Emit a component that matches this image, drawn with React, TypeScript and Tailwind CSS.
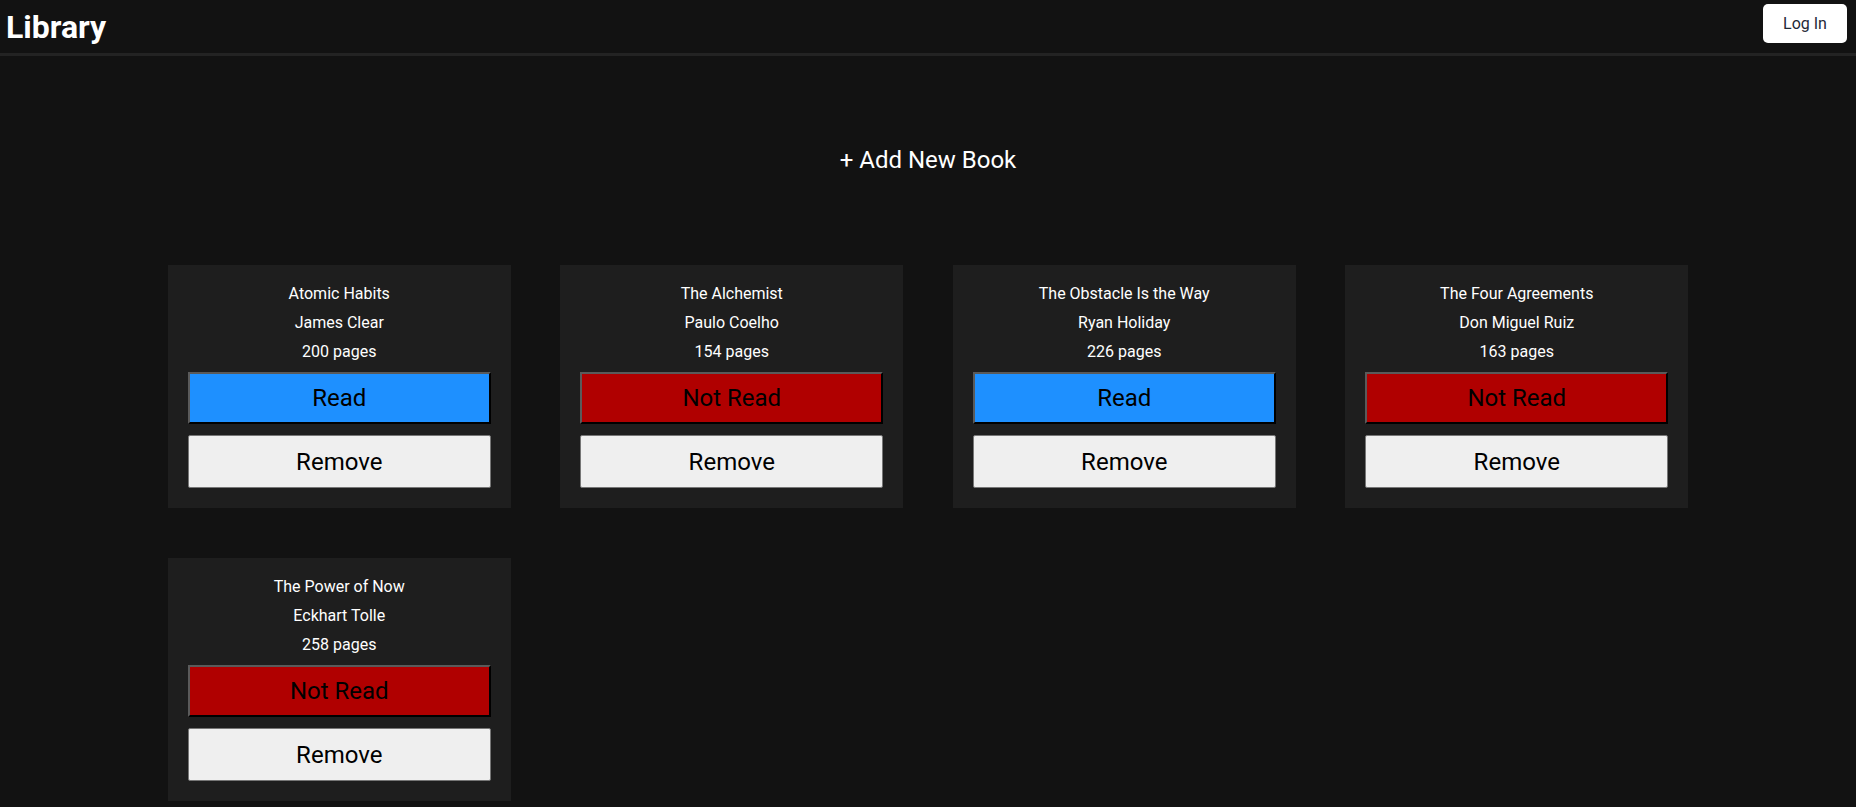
const books = [
  { title: 'Atomic Habits', author: 'James Clear', pages: 200, read: true },
  { title: 'The Alchemist', author: 'Paulo Coelho', pages: 154, read: false },
  { title: 'The Obstacle Is the Way', author: 'Ryan Holiday', pages: 226, read: true },
  { title: 'The Four Agreements', author: 'Don Miguel Ruiz', pages: 163, read: false },
  { title: 'The Power of Now', author: 'Eckhart Tolle', pages: 258, read: false },
];

const BookCard = ({ title, author, pages, read }: (typeof books)[number]) => (
  <div className="bg-[#1e1e1e] p-[20px] flex flex-col gap-[11px] text-center text-white text-[16px]">
    <p className="leading-[18px]">{title}</p>
    <p className="leading-[18px]">{author}</p>
    <p className="leading-[18px]">{pages} pages</p>
    {read ? (
      <button className="h-[52px] text-[24px] text-black bg-[#1e90ff] border-2 border-t-[#5a5a5a] border-l-[#5a5a5a] border-r-black border-b-black">
        Read
      </button>
    ) : (
      <button className="h-[52px] text-[24px] text-black bg-[#b00000] border-2 border-t-[#5a5a5a] border-l-[#5a5a5a] border-r-black border-b-black">
        Not Read
      </button>
    )}
    <button className="h-[53px] text-[24px] text-black bg-[#efefef] border border-[#767676] rounded-[2px]">
      Remove
    </button>
  </div>
);

export default function App() {
  return (
    <div className="min-h-screen bg-[#121212] font-['Roboto',sans-serif]">
      {/* Header */}
      <header className="h-[56px] flex items-center justify-between pl-[6px] pr-[9px] border-b-[3px] border-[#232323]">
        <h1 className="text-[32px] font-bold text-white leading-none">Library</h1>
        <button className="bg-white text-[#1f2937] text-[16px] rounded-[5px] w-[84px] h-[39px] mb-[6px]">
          Log In
        </button>
      </header>

      <main className="flex flex-col items-center pb-[40px]">
        <button className="mt-[90px] text-[24px] leading-[28px] text-white">+ Add New Book</button>

        <div className="mt-[91px] grid grid-cols-[repeat(4,343px)] gap-y-[50px] gap-x-[49.5px]">
          {books.map((book, idx) => (
            <BookCard key={idx} {...book} />
          ))}
        </div>
      </main>
    </div>
  );
}
